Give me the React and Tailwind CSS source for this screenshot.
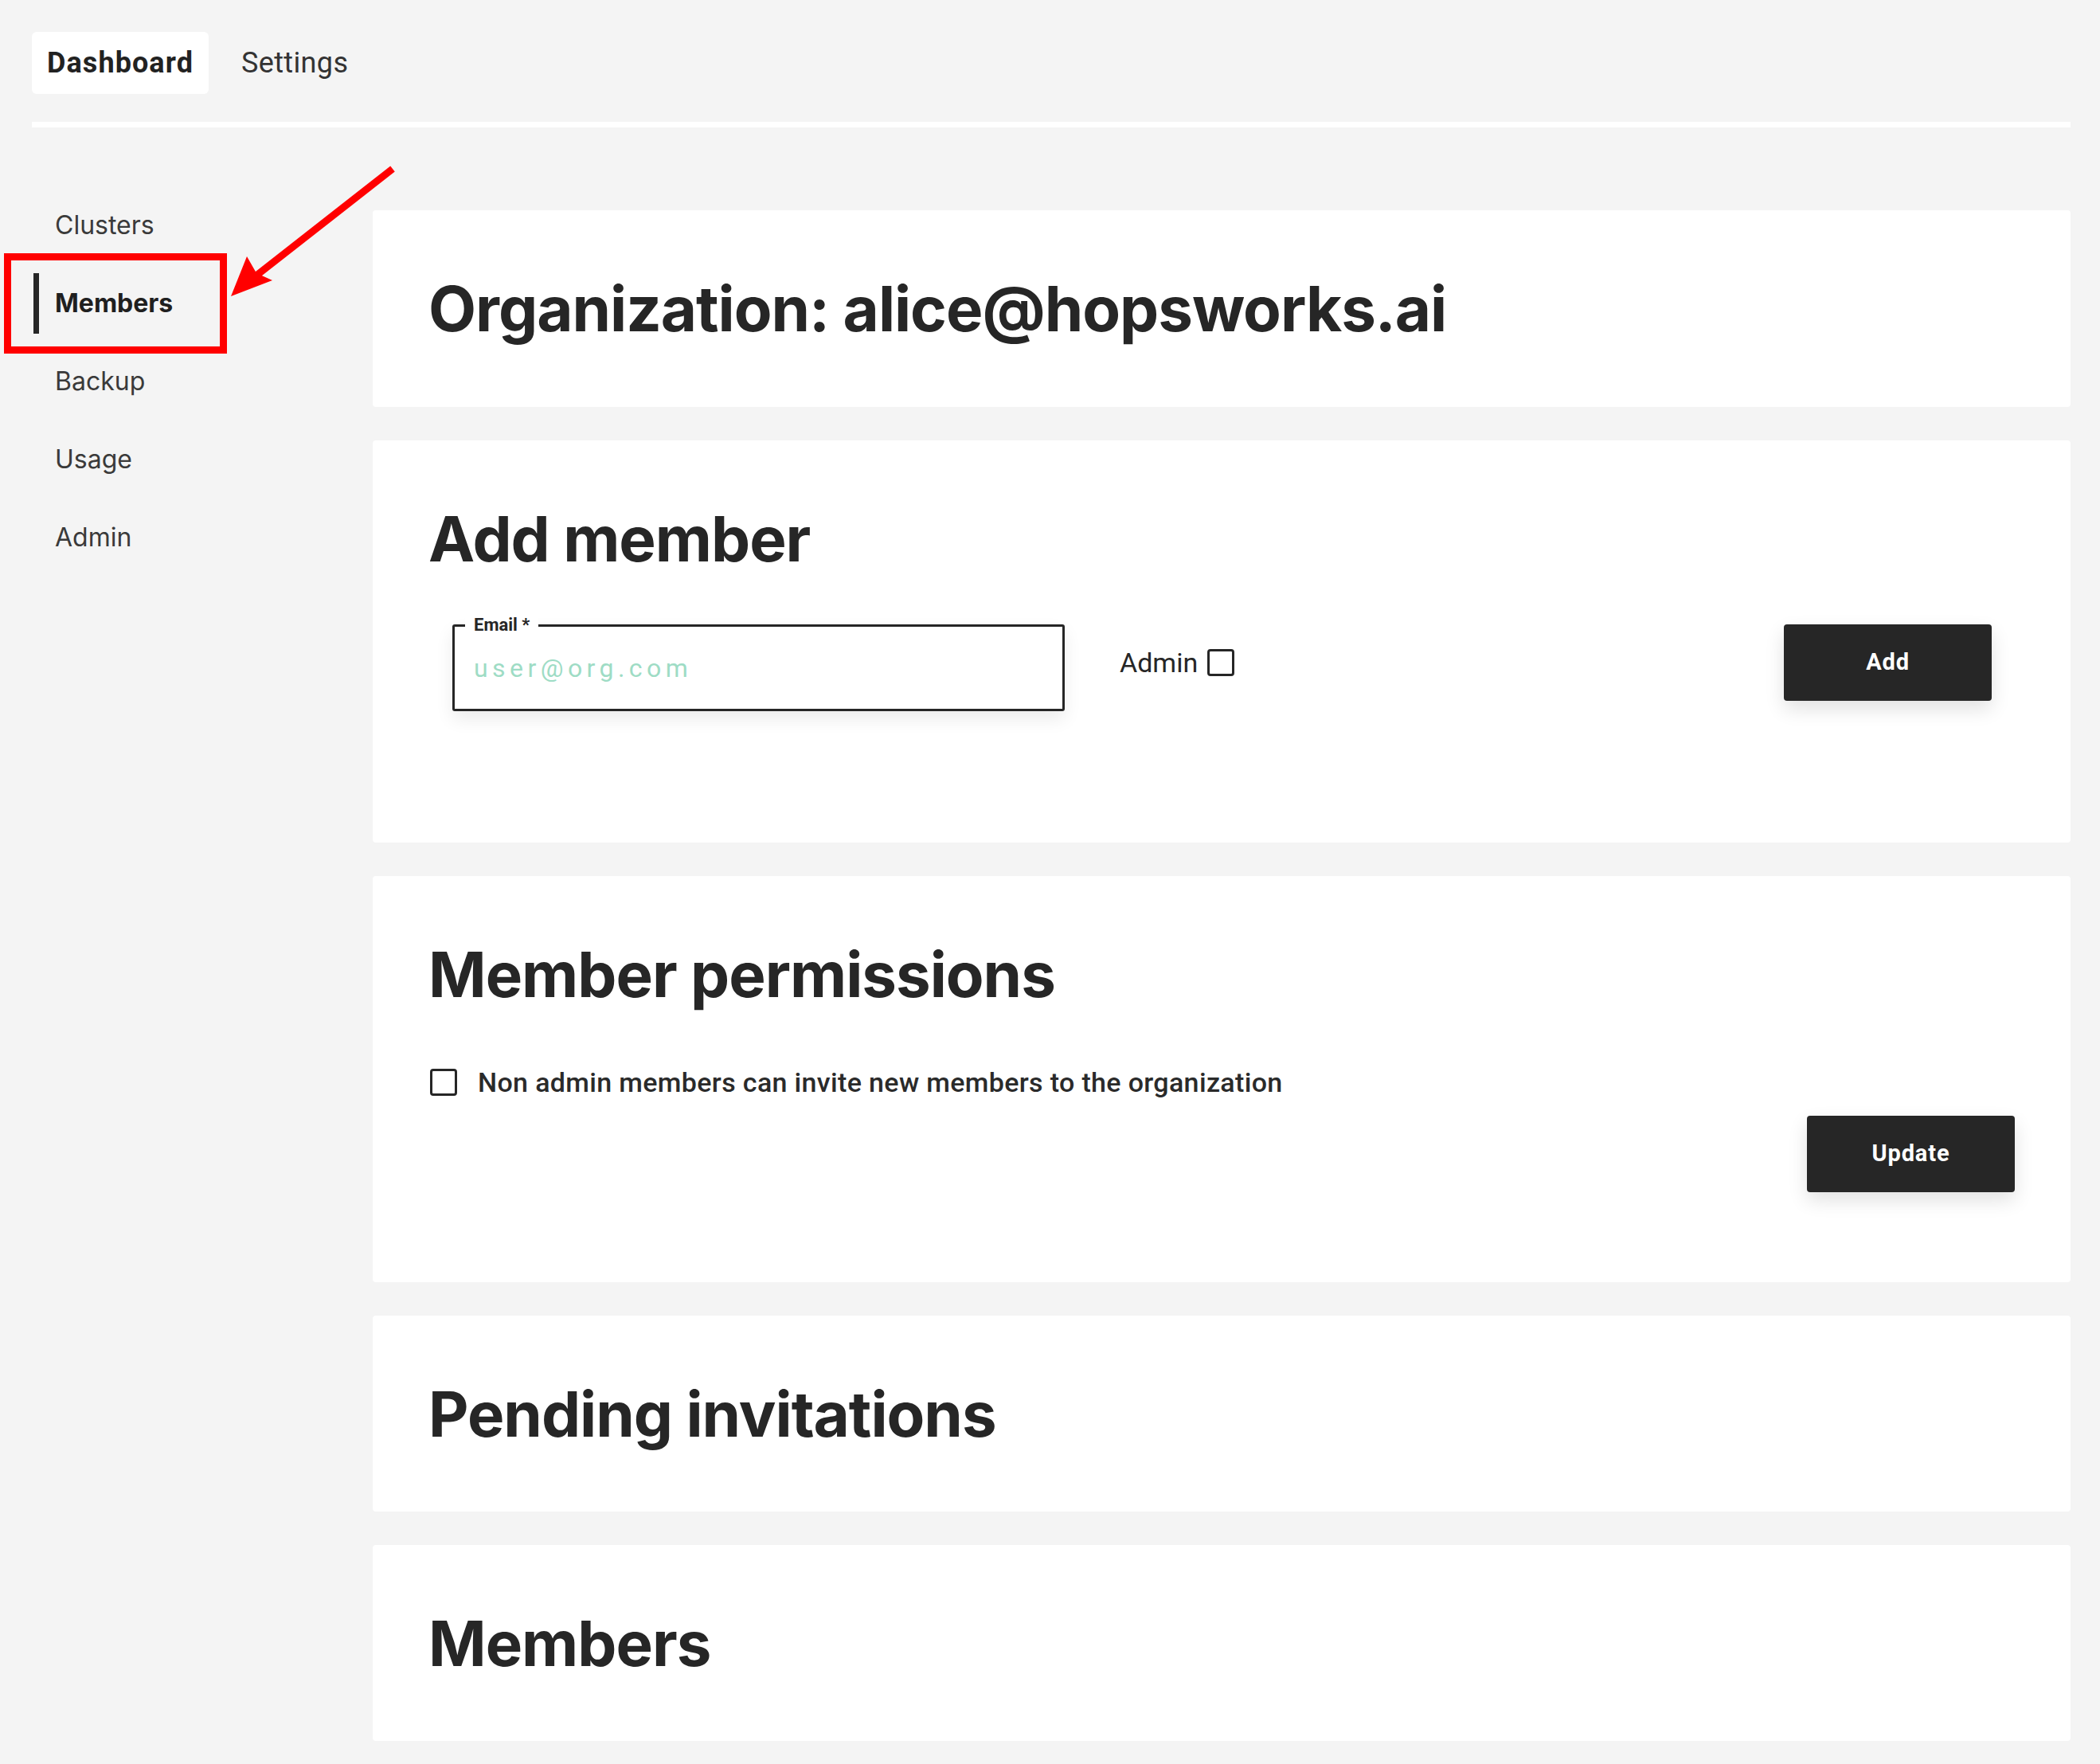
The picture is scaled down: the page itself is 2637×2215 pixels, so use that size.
import React from 'react';

const navItems = ['Clusters', 'Members', 'Backup', 'Usage', 'Admin'];

function Card({ title, children, className = '' }) {
    return (
        <section className={`rounded-[4px] bg-white px-[70px] pt-[64px] ${className}`}>
            <h2 className="font-['Inter',sans-serif] text-[78px] font-bold leading-[120px] tracking-[-0.013em] text-[#262626]">
                {title}
            </h2>
            {children}
        </section>
    );
}

function Checkbox() {
    return <span className="block h-[34px] w-[34px] shrink-0 rounded-[4px] border-[3px] border-[#262626] bg-white" />;
}

export default function App() {
    return (
        <div className="relative min-h-screen bg-[#f4f4f4] pb-[32px] font-['Roboto',sans-serif] text-[#262626]">
            <header className="pl-[40px] pr-[37px] pt-[40px]">
                <div className="flex items-center">
                    <div className="flex h-[78px] w-[222px] items-center justify-center rounded-[6px] bg-white text-[36px] font-bold tracking-[0.03em] text-[#222]">
                        Dashboard
                    </div>
                    <div className="ml-[41px] text-[36px] tracking-[0.01em] text-[#333]">Settings</div>
                </div>
                <div className="mt-[35px] h-[7px] bg-white" />
            </header>

            <div className="flex pr-[37px] pt-[74px]">
                <nav className="w-[468px] shrink-0 font-['Inter',sans-serif]">
                    {navItems.map((item) => {
                        const active = item === 'Members';
                        return (
                            <div key={item} className="flex h-[98px] items-center pl-[42px]">
                                <div
                                    className={`flex h-[76px] items-center border-l-[7px] pl-[20px] text-[32px] ${
                                        active ? 'border-[#262626] font-bold text-[#1f1f1f]' : 'border-transparent text-[#3a3a3a]'
                                    }`}
                                >
                                    {item}
                                </div>
                            </div>
                        );
                    })}
                </nav>

                <main className="mt-[30px] flex flex-1 flex-col gap-[42px]">
                    <Card title="Organization: alice@hopsworks.ai" className="pb-[63px]" />

                    <Card title="Add member" className="pb-[165px]">
                        <div className="mt-[47px] flex items-start pl-[30px] pr-[29px]">
                            <div className="relative h-[109px] w-[769px] shrink-0 rounded-[3px] border-[3px] border-[#262626] shadow-[0_10px_22px_rgba(0,0,0,0.08)]">
                                <span className="absolute left-[13px] top-[-2px] -translate-y-1/2 bg-white px-[11px] text-[22px] font-bold leading-none">
                                    Email *
                                </span>
                                <input
                                    type="email"
                                    placeholder="user@org.com"
                                    className="h-full w-full bg-transparent px-[24px] text-[32px] tracking-[0.17em] outline-none placeholder:text-[#9edcc5]"
                                />
                            </div>
                            <label className="ml-[69px] flex h-[96px] items-center gap-[12px] text-[34px]">
                                Admin
                                <Checkbox />
                            </label>
                            <button className="ml-auto h-[96px] w-[261px] rounded-[4px] bg-[#262626] text-[29px] font-bold tracking-[0.03em] text-white shadow-[0_10px_24px_rgba(0,0,0,0.12)]">
                                Add
                            </button>
                        </div>
                    </Card>

                    <Card title="Member permissions" className="pb-[113px]">
                        <div className="mt-[55px] flex h-[40px] items-center gap-[26px] pl-[2px]">
                            <Checkbox />
                            <span className="text-[34px] font-medium tracking-[0.01em] text-[#2a2a2a]">
                                Non admin members can invite new members to the organization
                            </span>
                        </div>
                        <div className="mt-[22px] flex justify-end">
                            <button className="h-[96px] w-[261px] rounded-[4px] bg-[#262626] text-[29px] font-bold tracking-[0.03em] text-white shadow-[0_10px_24px_rgba(0,0,0,0.12)]">
                                Update
                            </button>
                        </div>
                    </Card>

                    <Card title="Pending invitations" className="pb-[62px]" />

                    <Card title="Members" className="pb-[62px]" />
                </main>
            </div>

            {/* annotation: red box + arrow pointing at the Members entry */}
            <div className="pointer-events-none absolute left-[5px] top-[318px] h-[126px] w-[280px] border-[9px] border-[#ff0000]" />
            <svg className="pointer-events-none absolute left-0 top-0" width="520" height="460" viewBox="0 0 520 460">
                <line x1="493" y1="212" x2="318" y2="349" stroke="#ff0000" strokeWidth="9" />
                <polygon points="290,372 310,322 322,343 342,352" fill="#ff0000" />
            </svg>
        </div>
    );
}
